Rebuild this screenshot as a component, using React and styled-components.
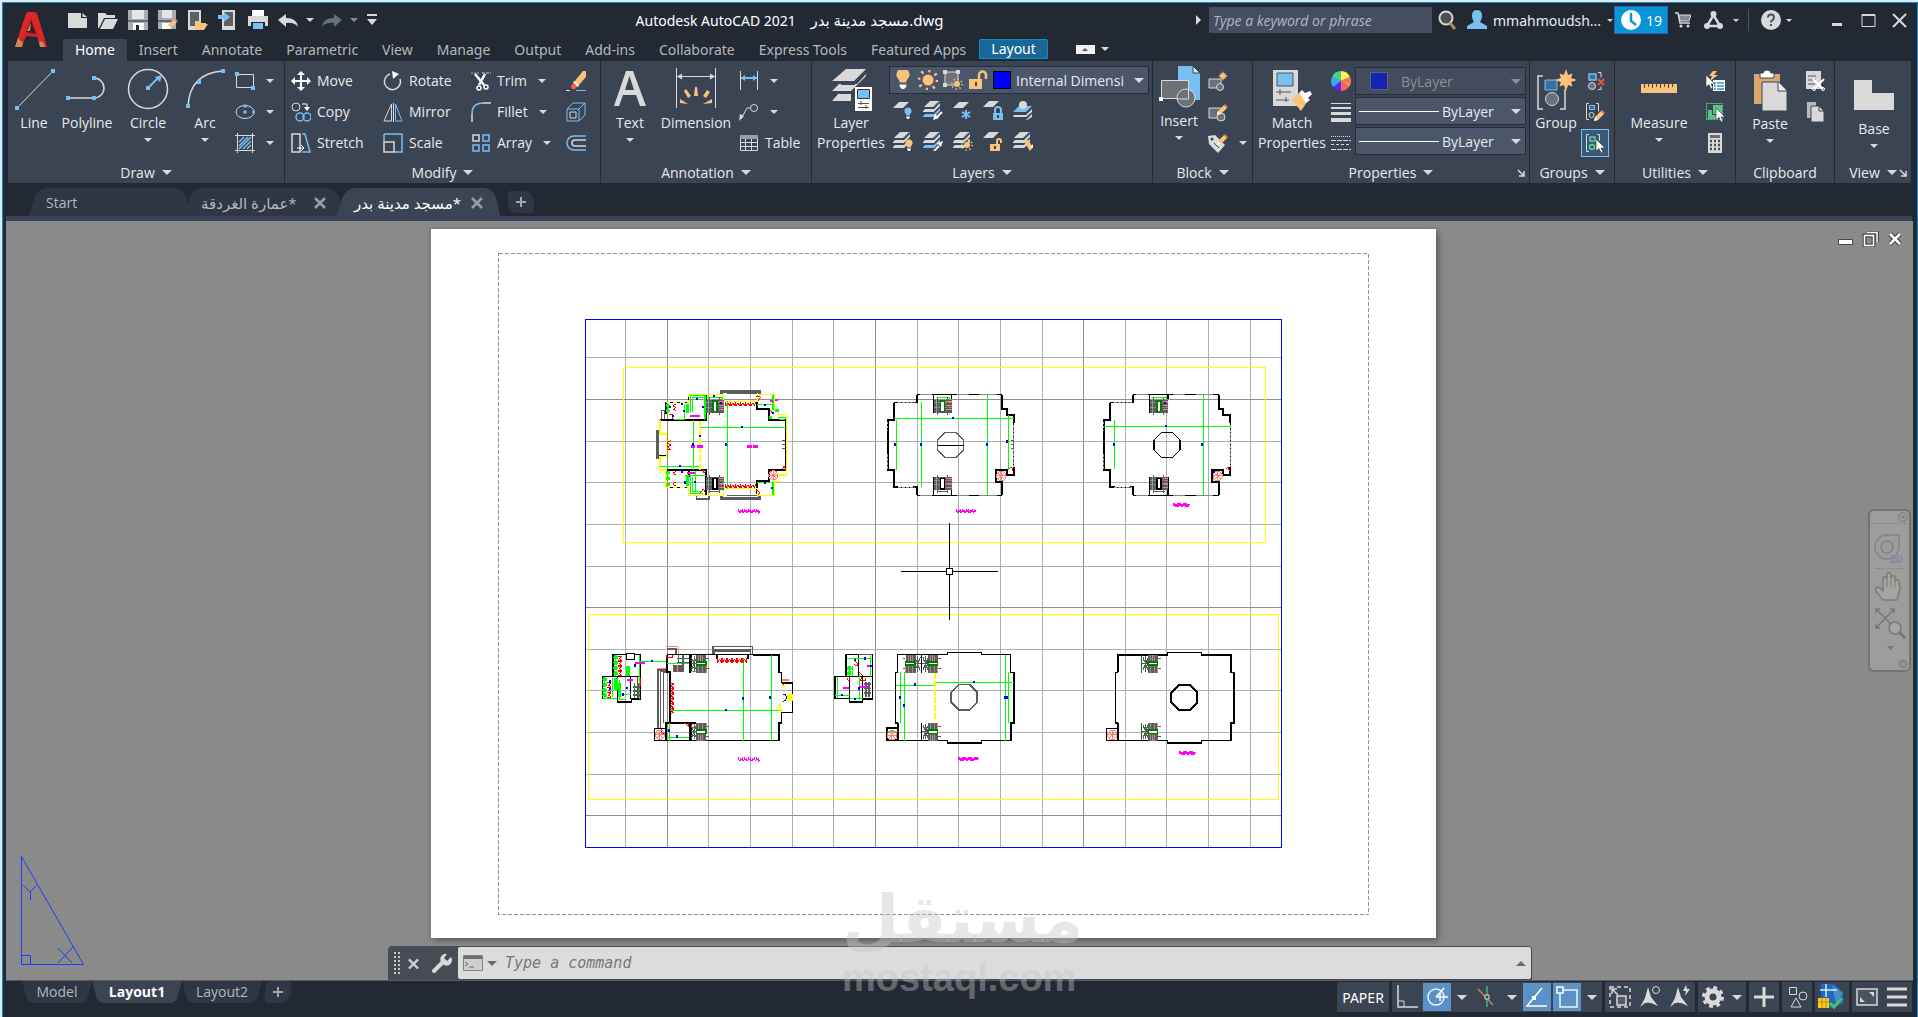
import React, { useState } from "react";
import styled, { createGlobalStyle, css } from "styled-components";

const GlobalStyle = createGlobalStyle`
  * {
    box-sizing: border-box;
  }
  body {
    margin: 0;
    background: #e4e9ec;
    font-family: "Open Sans", "DejaVu Sans", sans-serif;
    font-size: 14px;
    color: #e8eaed;
  }
  button, input, select {
    font: inherit;
    color: inherit;
    border: 0;
    padding: 0;
    margin: 0;
    background: none;
  }
  button {
    cursor: pointer;
  }
  svg {
    display: block;
    flex: none;
  }
`;

const L = "#d9d9d9";
const B = "#79bff2";
const O = "#f6c47a";
const G = "#6e7278";

/* ---------- icons ---------- */

const Svg = ({ w = 20, h = w, vw = w, vh = h, children }) => (
  <svg width={w} height={h} viewBox={`0 0 ${vw} ${vh}`} fill="none">
    {children}
  </svg>
);

const Dot = ({ x, y, s = 4, c = B }) => (
  <rect x={x - s / 2} y={y - s / 2} width={s} height={s} fill={c} />
);

const Sun = ({ x, y, r = 4, c = O }) => (
  <g>
    <circle cx={x} cy={y} r={r} fill={c} />
    <circle cx={x} cy={y} r={r * 1.7} stroke={c} strokeWidth={r * 0.6} strokeDasharray={`${r * 0.4} ${r * 0.935}`} />
  </g>
);

const Star = ({ x, y, r = 8 }) => {
  const pts = [];
  for (let i = 0; i < 16; i++) {
    const q = i % 2 ? r * 0.5 : i % 4 ? r * 0.85 : r;
    const a = (i * Math.PI) / 8;
    pts.push(`${x + Math.sin(a) * q},${y - Math.cos(a) * q}`);
  }
  return <polygon points={pts.join(" ")} fill={O} />;
};

const Pencil = ({ x, y }) => (
  <g transform={`translate(${x} ${y})`}>
    <path d="M0 10 L1 6 L7 0 L10 3 L4 9 Z" fill={O} />
    <path d="M7 0 L8 -1 L11 2 L10 3 Z" fill="#f0705a" />
    <path d="M0 10 L1 6 L4 9 Z" fill="#fff" />
  </g>
);

const Bulb = ({ x, y, k = 1, c = O }) => (
  <g transform={`translate(${x} ${y}) scale(${k})`}>
    <path d="M-6 -3 a6 6 0 1 1 12 0 c0 3 -3 4 -3 7 h-6 c0 -3 -3 -4 -3 -7z" fill={c} />
    <path d="M-3 6h6v2l-2 2h-2l-2-2z" fill="#fff" />
  </g>
);

const Lock = ({ x, y, c = O, open }) => (
  <g>
    <rect x={x} y={y} width="10" height="7" fill={c} />
    <path d={open ? `M${x + 7} ${y} v-3 a2 2 0 0 1 4 0 v2` : `M${x + 2} ${y} v-3 a3 3 0 0 1 6 0 v3`} stroke={c} strokeWidth="2" />
    <rect x={x + 4} y={y + 2} width="2" height="3" fill="#444" />
  </g>
);

const Sheet = ({ x = 0, y = 0, c = L }) => <path d={`M${x + 6} ${y} h10 l-6 6 h-10z`} fill={c} />;

const Layers3 = ({ c = L, last = L }) => (
  <g>
    <Sheet x={1} y={1} c={c} />
    <path d="M2 9 h9 l6-6 v3 l-6 6 h-12z" fill={c} />
    <path d="M2 14 h9 l6-6 v3 l-6 6 h-12z" fill={last} />
    <path d="M0 7.500h10l6-6M0 12.500h11l6-6" stroke="#3b4453" />
  </g>
);

const Cursor = ({ x, y }) => (
  <path transform={`translate(${x} ${y})`} d="M0 0 V12 L3 9.500 L5 14 L7 13 L5 9 H9 Z" fill="#fff" stroke="#333" strokeWidth=".6" />
);

const LogoIcon = () => (
  <svg width="34" height="38" viewBox="0 0 34 38">
    <path d="M1 36 L12 3 Q13 1 15 1 H19 Q22 1 23 3 L33 36 H26 L23 26 L12 25 L8 36 Z" fill="#c4262b" />
    <path d="M12 3 Q13 1 15 1 H19 Q22 1 23 3 L33 36 H29 L17 7 L7 31 L3 30 Z" fill="#e02427" />
    <path d="M1 36 L4 27 L9 32 L8 36 Z M26 36 L25 30 L29 31 L31 36 Z" fill="#c98a5a" />
    <path d="M17 9 L22 23 L12 21 Z" fill="#3a1f24" />
    <path d="M13 20 L17 11 L16 20 Z" fill="#c98a5a" />
  </svg>
);

const icons = {
  newFile: <Svg><path d="M0 3h13v5h6v10H0z" fill={L} /><path d="M14.500 3l4.500 4h-4.500z" fill={L} /></Svg>,
  open: <Svg><path d="M0 3h7l2 2h8v3H6L1 18H0z" fill={L} /><path d="M7 9h13l-5 10H2z" fill={L} /></Svg>,
  save: (
    <Svg><path d="M0 0h20v20H0z" fill="#a9adb3" /><path d="M4 0h12v9H4z" fill="#e6e6e6" /><path d="M5 13h11v7H5z" fill="#fff" /><path d="M8 15h3v5H8z" fill="#222933" /><path d="M0 11h20" stroke="#222933" /></Svg>
  ),
  saveAs: (
    <Svg><path d="M0 0h18v19H0z" fill="#a9adb3" /><path d="M4 0h10v8H4z" fill="#e6e6e6" /><path d="M4 13h9v6H4z" fill="#fff" /><path d="M0 11h18" stroke="#222933" /><Pencil x={9} y={9} /></Svg>
  ),
  openMobile: (
    <Svg><path d="M0 0h13v20H0z" fill={L} /><path d="M2 2h9v14H2z" fill="#5d6167" /><path d="M7 11h5l1 2h5v2h-7l-3 5h-1z" fill={O} /><path d="M11 14h9l-4 6H8z" fill={O} /></Svg>
  ),
  saveMobile: (
    <Svg><path d="M4 0h13v20H4z" fill={L} /><path d="M6 2h9v14H6z" fill="#5d6167" /><path d="M0 5h6V2l6 5-6 5V9H0z" fill={B} /></Svg>
  ),
  print: (
    <Svg><path d="M4 0h12v6H4z" fill="#fff" /><path d="M0 6h20v10H0z" fill={L} /><path d="M3 12h14v8H3z" fill="#222933" /><path d="M5 13h10v6H5z" fill={B} /></Svg>
  ),
  undo: <Svg><path d="M0 10l8-6v4q11 0 12 9q-4-5-12-4v4z" fill={L} /></Svg>,
  redo: <Svg><path d="M20 10l-8-6v4q-11 0-12 9q4-5 12-4v4z" fill="#6a7079" /></Svg>,
  customize: <Svg w={12} h={12}><path d="M1 1h10" stroke={L} strokeWidth="2" /><path d="M1 5h10l-5 6z" fill={L} /></Svg>,
  search: <Svg><circle cx="9" cy="8" r="6.500" fill="#4d4f52" stroke={L} strokeWidth="2" /><path d="M13 13l5 6" stroke="#a98d63" strokeWidth="3" /></Svg>,
  user: <Svg><path d="M10 0c4 0 5 3 5 6 0 3-2 6-2 6l7 4v3H0v-3l7-4s-2-3-2-6c0-3 1-6 5-6z" fill={B} /></Svg>,
  clock: <Svg><circle cx="10" cy="10" r="10" fill="#fff" /><path d="M10 3v8l5 4" stroke="#0696d7" strokeWidth="2.500" /></Svg>,
  cart: (
    <Svg w={16}><path d="M0 1h3l2 10h10" stroke={L} strokeWidth="1.500" /><path d="M4 3h12l-2 6H5z" fill="#85888c" stroke={L} /><circle cx="6" cy="14" r="1.500" fill={L} /><circle cx="13" cy="14" r="1.500" fill={L} /></Svg>
  ),
  a360: <Svg w={19}><path d="M9.500 4L3 15h13z" stroke={L} strokeWidth="2.500" /><circle cx="9.500" cy="3" r="3" fill={L} /><circle cx="3" cy="15" r="3" fill={L} /><circle cx="16" cy="15" r="3" fill={L} /></Svg>,
  help: <Svg><circle cx="10" cy="10" r="10" fill={L} /><path d="M7 7.500q0-3 3-3t3 3q0 2-3 4v1" stroke="#4a4f57" strokeWidth="2" /><path d="M9 14h2v2H9z" fill="#4a4f57" /></Svg>,
  min: <Svg w={15}><path d="M2 10h10v3H2z" fill={L} /></Svg>,
  max: <Svg w={15}><path d="M1 1.500h13v12H1z" stroke={L} /><path d="M1 2h13" stroke={L} strokeWidth="2" /></Svg>,
  close: <Svg w={15}><path d="M1 1l13 13M14 1L1 14" stroke={L} strokeWidth="2" /></Svg>,

  line: <Svg w={42} h={44}><path d="M4 41L40 4" stroke={L} /><Dot x={4} y={41} /><Dot x={40} y={4} /></Svg>,
  polyline: <Svg w={42} h={44}><path d="M2 31H28A9 9 0 0 0 28 11" stroke={L} strokeWidth="1.500" /><Dot x={2} y={31} /><Dot x={28} y={31} /><Dot x={28} y={11} /></Svg>,
  circle: <Svg w={42} h={44}><circle cx="21" cy="22" r="19.500" stroke={L} strokeWidth="1.500" /><path d="M21 21l10-10" stroke={B} strokeWidth="2" /><path d="M35 8l-2 7-5-5z" fill={B} /><Dot x={21} y={21} /></Svg>,
  arc: <Svg w={42} h={44}><path d="M4 39Q6 6 39 4" stroke={L} strokeWidth="1.500" /><Dot x={4} y={39} /><Dot x={15} y={15} /><Dot x={39} y={4} /></Svg>,
  rect: <Svg><path d="M1.500 3.500h17v13h-17z" stroke={L} /><Dot x={2} y={3} /><Dot x={18} y={17} /></Svg>,
  ellipse: <Svg><ellipse cx="10" cy="10" rx="9" ry="6.500" stroke={L} /><Dot x={10} y={4} s={3} /><Dot x={10} y={10} s={3} /><Dot x={19} y={10} s={3} /></Svg>,
  hatch: <Svg><path d="M0 2.500h20M0 17.500h20M2.500 0v20M17.500 0v20" stroke={L} /><path d="M4 9l5-5M4 13l9-9M4 16L16 4M8 16l8-8M12 16l4-4" stroke={B} strokeWidth="1.500" /></Svg>,

  move: <Svg><path d="M10 2v16M2 10h16" stroke="#fff" strokeWidth="2" /><path d="M10 0l4 4H6zM10 20l4-4H6zM0 10l4-4v8zM20 10l-4-4v8z" fill="#fff" /></Svg>,
  rotate: <Svg><path d="M7 3A8 8 0 1 0 17 8" stroke={L} strokeWidth="1.500" /><path d="M9 0l7 3-6 5z" fill="#fff" /></Svg>,
  trim: (
    <Svg><path d="M0 2h8" stroke={B} strokeDasharray="2 1" /><path d="M11 2h9" stroke={L} strokeDasharray="3 1" /><path d="M4 3l9 11M14 3L8 14" stroke="#fff" strokeWidth="2.500" /><circle cx="8" cy="17" r="2" stroke="#fff" strokeWidth="1.500" /><circle cx="15" cy="16" r="2" stroke="#fff" strokeWidth="1.500" /></Svg>
  ),
  erase: <Svg><path d="M8 11L17 0h3v6l-8 9z" fill={O} /><path d="M8 11l4 4-3 3q-4 1-4-3z" fill="#f0624d" /><path d="M7 11l5 5 1-1-5-5z" fill="#fff" /><path d="M0 19.500h4" stroke={L} /><path d="M10 19.500h10" stroke={B} /></Svg>,
  copy: <Svg><circle cx="5" cy="5" r="4" stroke={L} /><path d="M11 2h5v3" stroke="#fff" /><path d="M13 5h6l-3 4z" fill="#fff" /><circle cx="9" cy="15" r="4" stroke={B} strokeWidth="1.500" /><circle cx="16" cy="15" r="4" stroke={B} strokeWidth="1.500" /></Svg>,
  mirror: <Svg><path d="M8.500 2v17H1z" stroke={L} /><path d="M12.500 2v17H19z" stroke={B} /><path d="M10.500 1v19" stroke={L} /></Svg>,
  fillet: <Svg><path d="M1 12v8M12 1h8" stroke={L} strokeWidth="1.500" /><path d="M1 12Q1 1 12 1" stroke={B} strokeWidth="1.500" /></Svg>,
  explode: <Svg><path d="M1 7h12v12H1zM1 7l6-6h12l-6 6M19 1v12l-6 6" stroke={B} /><path d="M4 10h6v6H4z" stroke={L} /></Svg>,
  stretch: <Svg><path d="M1 1h8v18H1z" stroke={L} strokeWidth="1.500" /><path d="M11 1h3l5 18h-8" stroke={B} strokeWidth="1.500" /><path d="M6 15h7M10 12l3 3-3 3" stroke="#fff" /></Svg>,
  scale: <Svg><path d="M1 1h18v18h-8M1 1v7" stroke={B} strokeWidth="1.500" /><path d="M1 9h10v10H1z" stroke={L} strokeWidth="1.500" /></Svg>,
  array: <Svg><path d="M2 2h6v6H2z" stroke={L} strokeWidth="1.500" /><path d="M12 2h6v6h-6zM2 12h6v6H2zM12 12h6v6h-6z" stroke={B} strokeWidth="1.500" /></Svg>,
  offset: <Svg><path d="M20 3H8a7 7 0 0 0 0 14h12" stroke={B} strokeWidth="1.500" /><path d="M20 7H9a3 3 0 0 0 0 6h11" stroke={L} strokeWidth="1.500" /></Svg>,

  text: <Svg w={42} h={44}><path d="M5 39L17 4h7l13 35h-6l-4-11H14l-4 11zM16 23h9L20.500 9z" fill={L} fillRule="evenodd" /></Svg>,
  dimension: (
    <Svg w={42} h={44}><path d="M1.500 1v40M40.500 1v40M2 9.500h38" stroke={L} /><path d="M2 9.500l5-3v6zM40 9.500l-5-3v6z" fill={L} /><path d="M19 29l1-9h2l1 9zM13 31l-4-7 2-2 5 7zM28 29l4-6 3 2-4 6zM13 37l-8-1v-4zM28 37l9-1v-4z" fill={O} /></Svg>
  ),
  linear: <Svg><path d="M1.500 0v19M18.500 0v19" stroke={L} /><path d="M2 7h16" stroke={B} strokeWidth="2" /><path d="M2 7l4-3v6zM18 7l-4-3v6z" fill={B} /></Svg>,
  leader: <Svg><circle cx="15" cy="6" r="3.500" stroke={L} /><path d="M11 6H8L2 17" stroke={L} /><path d="M0 19l1-7 4 2z" fill={L} /></Svg>,
  table: <Svg><path d="M1.500 2.500h17v15h-17z" stroke={L} /><path d="M1 2h18v4H1z" fill="#9a9da1" /><path d="M1 9.500h18M1 13.500h18M6.500 6v11M12.500 6v11" stroke={L} /></Svg>,

  layerProps: (
    <Svg w={42} h={44}><path d="M16 2h20L24 14H2zM9 17l-7 7h19L36 9V7l-9 10zM9 26l-7 8h19V26z" fill={L} /><path d="M11 17h14M9 26h14" stroke="#3b4453" strokeWidth="2" /><path d="M25 20h17v24H25z" fill="#fff" /><path d="M27.500 22.500h12v9h-12z" fill={B} stroke="#333" /><path d="M28 36.500h11M28 40.500h11M31 34v4M36 38v4" stroke="#555" /></Svg>
  ),
  bulb: <Svg w={20}><Bulb x={10} y={8} k={1.1} /></Svg>,
  sun: <Svg><Sun x={10} y={10} r={5.500} /></Svg>,
  freezeVp: <Svg><path d="M2 2h13v13H2z" fill={G} stroke={L} /><Dot x={2} y={2} c={L} /><Dot x={15} y={2} c={L} /><Dot x={2} y={15} c={L} /><Sun x={14} y={14} r={3} /></Svg>,
  unlock: <Svg><path d="M1 9h13v10H1z" fill={O} /><path d="M11 9V5a3.500 3.500 0 0 1 7 0v4" stroke={O} strokeWidth="2.500" /><path d="M7 12h2v4H7z" fill="#444" /></Svg>,
  layOff: <Svg><Sheet y={2} /><Bulb x={15} y={13} k={0.6} c={B} /></Svg>,
  layIso: <Svg><Layers3 last={B} /><path d="M19 12l-5 5" stroke="#fff" strokeWidth="2" /><path d="M10 20l2-6 4 4z" fill="#fff" /></Svg>,
  layFreeze: <Svg><Sheet y={2} /><path d="M13 10v9M9 12l8 5M17 12l-8 5" stroke={B} strokeWidth="2" /></Svg>,
  layLock: <Svg><Sheet y={1} /><Lock x={10} y={13} c={B} /></Svg>,
  layCurrent: <Svg><path d="M0 12l6-6h13l-6 6z" fill={B} /><circle cx="10" cy="5" r="4" fill={L} /><path d="M1 15h12l6-6v3l-6 5H0zM0 20h13l6-6v3l-5 3z" fill={L} /></Svg>,
  layOn: <Svg><Layers3 /><Bulb x={16} y={14} k={0.6} /></Svg>,
  layUniso: <Svg><Layers3 last={B} /><path d="M11 20l5-5" stroke="#fff" strokeWidth="2" /><path d="M20 10l-2 6-4-4z" fill="#fff" /></Svg>,
  layThaw: <Svg><Layers3 /><Sun x={14} y={14} r={3} /></Svg>,
  layUnlock: <Svg><Sheet y={1} /><Lock x={7} y={13} open /></Svg>,
  layMatch: <Svg><Layers3 /><path d="M11 11l3-3 6 8-3 4z" fill={O} /><path d="M17 17l3-4v4z" fill="#fff" /></Svg>,

  insert: (
    <Svg w={42} h={44}><path d="M20 1h15l7 7v27H20z" fill={B} /><path d="M35 1v7h7z" fill="#d3e9f9" stroke="#3b4453" /><path d="M3.500 15.500h27v18h-27z" fill={G} stroke={L} /><circle cx="28" cy="33" r="9" fill={G} stroke={L} /><path d="M30.500 16v18H19" stroke={L} /><Dot x={3} y={34} c="#fff" /></Svg>
  ),
  blkNew: <Svg><path d="M1 8h12v9H1z" fill={G} stroke={L} /><circle cx="12" cy="16" r="3.500" fill={G} stroke={L} /><Star x={15} y={5} r={5} /></Svg>,
  blkEdit: <Svg><path d="M1 6h12v10H1z" fill={G} stroke={L} /><circle cx="13" cy="15" r="4" fill={G} stroke={L} /><Pencil x={9} y={3} /></Svg>,
  attEdit: <Svg><path d="M0 3l7-1 10 10-7 8L1 11z" fill={L} /><circle cx="4" cy="6" r="1.500" fill="#3b4453" /><path d="M6 10l5 5" stroke="#3b4453" /><Pencil x={9} y={2} /></Svg>,

  match: (
    <Svg w={42} h={44}><path d="M2 3h25v36H2z" fill={L} /><path d="M6 6h16v13H6z" fill={B} stroke="#51555c" /><path d="M5 25h15M5 33h13M9 22v6M15 30v5" stroke="#51555c" /><path d="M21 32l7-6 8 9-6 9-5-6z" fill={O} /><path d="M28 26l3-3 3 3 5-2 2 3-4 4 2 2-4 3z" fill="#fff" /></Svg>
  ),
  wheel: (
    <Svg><path d="M10 10V0a10 10 0 0 1 9 6z" fill="#fff04d" /><path d="M10 10l9-4a10 10 0 0 1-1 10z" fill="#f9a43c" /><path d="M10 10l8 6a10 10 0 0 1-8 4z" fill="#fa5d6f" /><path d="M10 10v10a10 10 0 0 1-8-4z" fill="#5527f3" /><path d="M10 10l-8 6a10 10 0 0 1-1-10z" fill="#3fa8f5" /><path d="M10 10L1 6a10 10 0 0 1 9-6z" fill="#3fd68d" /><path d="M10 10l9-4a10 10 0 0 1 0 7z" fill="#fb6f5f" /></Svg>
  ),
  weights: <Svg><path d="M0 1.500h20" stroke={L} /><path d="M0 6h20" stroke={L} strokeWidth="2" /><path d="M0 11.500h20" stroke={L} strokeWidth="3" /><path d="M0 18h20" stroke={L} strokeWidth="4" /></Svg>,
  linetypes: <Svg><path d="M0 3.500h20" stroke={L} strokeDasharray="1 1" /><path d="M0 7.500h20M0 16.500h20" stroke={L} strokeDasharray="5 1" /><path d="M0 11.500h20" stroke={L} strokeDasharray="3 2" /></Svg>,

  group: (
    <Svg w={42} h={44}><path d="M8 9H3v33h5M25 42h5V22" stroke={L} strokeWidth="1.500" /><path d="M10 13h12v10H10z" fill="#3e6f9c" stroke={B} /><circle cx="17" cy="32" r="6.500" fill={G} stroke={L} /><Star x={31} y={13} r={11} /></Svg>
  ),
  ungroup: <Svg><path d="M4 3h7v6H4z" fill="#3e6f9c" stroke={B} strokeWidth="1.500" /><circle cx="7" cy="15" r="3.500" fill={G} stroke={L} /><path d="M13 1.500h3v5M13 18.500h3v-3" stroke={L} /><path d="M13 8l6 6M19 8l-6 6" stroke="#f04e3e" strokeWidth="2" /></Svg>,
  groupEdit: <Svg><path d="M4 1.500H1.500v16H4M11 1.500h2.500v8" stroke={L} /><path d="M4.500 3.500h5v4h-5z" fill="#3e6f9c" stroke={B} /><circle cx="6.500" cy="13" r="2.500" stroke={L} /><Pencil x={9} y={9} /></Svg>,
  groupSel: <Svg><path d="M4 1.500H1.500v17H4M12 1.500h2.500v6" stroke={L} /><path d="M5 4h5v4H5z" stroke="#5fd38d" strokeWidth="1.500" /><circle cx="7" cy="14" r="2.500" stroke="#5fd38d" strokeWidth="1.500" /><Cursor x={11} y={6} /></Svg>,

  measure: <Svg w={42} h={44}><path d="M3 17h36v9H3z" fill={O} /><path d="M6.500 17v4M10.500 17v3M14.500 17v4M18.500 17v3M22.500 17v4M26.500 17v3M30.500 17v4M34.500 17v3" stroke="#4b4a45" /></Svg>,
  quickSel: <Svg><path d="M8 9h12v11H8z" fill="#fff" /><path d="M9 12h2M9 15h2M9 18h2M12 12h7M12 15h7M12 18h7" stroke="#3a8ed0" strokeWidth="1.500" /><Cursor x={1} y={4} /><path d="M8 0h4L9 4h4L5 10l2-5H4z" fill={O} /></Svg>,
  selectAll: <Svg><path d="M1.500 1.500h16v16h-16z" stroke="#5fd38d" strokeDasharray="2 1" /><path d="M8 3h9v9H8zM3 8h4v5h5v4H3z" fill="#5cc28c" /><Cursor x={11} y={6} /></Svg>,
  calc: <Svg><path d="M3 0h14v20H3z" fill={L} /><path d="M5 2h10v3H5z" fill="#6a6d72" /><path d="M5 8h10M5 12h10M5 16h10" stroke="#4a4d52" strokeWidth="2.500" strokeDasharray="2 2" /></Svg>,

  paste: (
    <Svg w={42} h={44}><path d="M5 6h26v30H5z" fill="#dca76a" /><path d="M11 10V5h3q1-3 4-3t4 3h3v5z" fill="#fff" stroke="#3b4453" /><path d="M13 14h17l8 9v20H13z" fill={L} stroke="#3b4453" /><path d="M29 14v9h9" stroke="#3b4453" fill="#f2f2f2" /></Svg>
  ),
  cut: <Svg><path d="M1 0h15v18H1z" fill={L} /><path d="M3 5h8M3 9h8M3 13h7" stroke="#555" /><path d="M8 8l10 10M19 8L9 18" stroke="#fff" strokeWidth="2" /><circle cx="9" cy="18" r="1.500" stroke="#fff" /><circle cx="18" cy="18" r="1.500" stroke="#fff" /></Svg>,
  copyClip: <Svg><path d="M2 0h9v16H2z" fill="#b8babd" /><path d="M6 4h8l5 5v11H6z" fill={L} stroke="#3b4453" /><path d="M14 4v5h5" stroke="#3b4453" /></Svg>,
  base: <Svg w={42} h={44}><path d="M1 7h18v13h22v17H1z" fill={L} /></Svg>,

  ortho: <Svg w={24}><path d="M3 0v22h20" stroke={L} strokeWidth="1.500" /><path d="M3 16h6v6" stroke={L} /></Svg>,
  polar: <Svg w={24}><circle cx="11" cy="12" r="8" stroke="#e9f3fb" strokeWidth="1.500" /><path d="M11 12l8-9M11 12h12M15 8v8" stroke="#fff" strokeWidth="1.500" /></Svg>,
  iso: <Svg w={24}><path d="M3 4l15 16" stroke="#c97f5c" strokeWidth="1.500" /><path d="M12 1v21" stroke="#4fb07a" strokeWidth="1.500" /><path d="M10 10h4v4h-4z" fill="#3b4453" stroke={L} /></Svg>,
  otrack: <Svg w={24}><path d="M22 21H2L17 3" stroke="#fff" strokeWidth="1.500" /><Dot x={9} y={13} c="#fff" /></Svg>,
  osnap: <Svg w={24}><path d="M5 5h17v17H5z" stroke="#e9f3fb" strokeWidth="1.500" /><path d="M2 2h6v6H2z" fill="#5b91c4" stroke="#fff" strokeWidth="1.500" /></Svg>,
  selCycle: <Svg w={24}><path d="M2 2h20v20H2z" stroke={L} strokeWidth="1.500" strokeDasharray="4 3" /><path d="M9 11h9v9H9z" stroke={L} strokeWidth="1.500" fill="#555c68" /><path d="M5 5l5 5M4 9V4h5" stroke={L} strokeWidth="1.500" /></Svg>,
  annoVis: <Svg w={24}><path d="M10 2l3 10 7 9-7-3h-6l-5 4 5-9z" fill={L} /><path d="M10 17l3 5H7z" fill="#3b4453" /><circle cx="18" cy="5" r="3.500" stroke={L} /></Svg>,
  annoAuto: <Svg w={24}><path d="M10 2l3 10 7 9-7-3h-6l-5 4 5-9z" fill={L} /><path d="M10 17l3 5H7z" fill="#3b4453" /><path d="M18 0l-3 6h3l-1 5 5-7h-3z" fill={L} /></Svg>,
  gear: (
    <Svg w={24}><circle cx="12" cy="12" r="6" stroke={L} strokeWidth="5" /><circle cx="12" cy="12" r="9" stroke={L} strokeWidth="4" strokeDasharray="3.6 3.47" /></Svg>
  ),
  plus: <Svg w={24}><path d="M12 2v20M2 12h20" stroke={L} strokeWidth="3" /></Svg>,
  isolate: <Svg w={24}><path d="M4.500 2.500h7v7h-7z" stroke={L} /><circle cx="18" cy="11" r="4" stroke={L} /><path d="M11 13l5 9H6z" stroke={L} /></Svg>,
  gfx: (
    <Svg w={28} h={26}><path d="M3 0h13l9 8v12l-10 4H3z" fill="#2069b8" /><path d="M14 1l11 8-7 11z" fill="#4a8cc8" /><path d="M2 6h17M8 0v13" stroke="#d4ecff" strokeWidth="1.500" /><path d="M0 14h11v10H0z" fill="#f7cc1e" /><path d="M0 18h11M4 14v10M8 14v10" stroke="#c78a11" /><path d="M12 19l4 4 8-9" stroke="#4dbb6a" strokeWidth="3" /></Svg>
  ),
  fullscreen: <Svg w={24}><path d="M2 4h20v16H2z" stroke={L} strokeWidth="1.500" fill="#4b5260" /><path d="M14 7h5v5zM5 12v5h5z" fill={L} /></Svg>,
  menu: <Svg w={24}><path d="M2 4h20M2 12h20M2 20h20" stroke={L} strokeWidth="3" /></Svg>,
};

/* ---------- shared parts ---------- */

const Caret = styled.span`
  flex: none;
  width: 0;
  height: 0;
  border: ${({ $s = 4 }) => $s}px solid transparent;
  border-top-color: ${({ $c = "#d9d9d9" }) => $c};
  border-bottom-width: 0;
`;

const Window = styled.div`
  display: flex;
  flex-direction: column;
  min-height: calc(100vh - 2px);
  margin: 2px 0 0 2px;
  border: 1px solid #0a8fce;
  border-bottom: 0;
  background: #222933;
  position: relative;
`;

const Header = styled.header`
  display: grid;
  grid-template-columns: 60px 1fr;
  grid-template-rows: 36px 22px;
  font-family: "Noto Sans", "DejaVu Sans", sans-serif;
`;

const AppButton = styled.button`
  grid-row: 1 / 3;
  padding: 8px 0 0 11px;
  display: flex;
`;

const TitleBar = styled.div`
  display: flex;
  align-items: center;
  padding: 0 2px 2px 0;
`;

const ToolButton = styled.button`
  width: ${({ $w = 30 }) => $w}px;
  height: 30px;
  display: flex;
  align-items: center;
  justify-content: center;
`;

const Title = styled.div`
  flex: 1;
  text-align: center;
  white-space: pre;
  color: #fff;
  bdi {
    font-size: 15px;
  }
`;

const Search = styled.input`
  width: 223px;
  height: 26px;
  padding: 0 4px;
  background: #454e61;
  font-family: "Open Sans", sans-serif;
  font-style: italic;
  outline: none;
  &::placeholder {
    color: #b3b8c0;
    opacity: 1;
  }
`;

const RightCaret = styled.span`
  border: 5px solid transparent;
  border-left-color: #d9d9d9;
  border-right-width: 0;
  margin-right: 8px;
`;

const UserButton = styled.button`
  display: flex;
  align-items: center;
  gap: 6px;
  width: 152px;
  padding-left: 5px;
  white-space: nowrap;
`;

const Trial = styled.button`
  display: flex;
  align-items: center;
  gap: 5px;
  width: 54px;
  height: 28px;
  padding-left: 6px;
  background: #0696d7;
  border: 1px solid #2a63b5;
  color: #fff;
`;

const Divider = styled.span`
  width: 1px;
  height: 22px;
  margin: 0 7px 0 9px;
  background: #4a515d;
`;

const MenuCaret = styled(ToolButton)`
  justify-content: ${({ $end }) => ($end ? "flex-end" : "flex-start")};
`;

const TabRow = styled.nav`
  display: flex;
  align-items: stretch;
`;

const RibbonTab = styled.button`
  padding: 0 12px;
  color: #b4b8be;
  white-space: nowrap;
  line-height: 20px;
  border-radius: 2px 2px 0 0;
  ${({ $active }) =>
    $active &&
    css`
      background: #3b4453;
      color: #fff;
    `}
  ${({ $context }) =>
    $context &&
    css`
      background: #1a6695;
      border: 1px solid #0a8fce;
      color: #fff;
      padding: 0 11px;
      line-height: 18px;
      margin: 0 28px 2px 1px;
    `}
`;

const Collapse = styled.button`
  display: flex;
  align-items: center;
  gap: 6px;
  padding-bottom: 2px;
  span:first-child {
    width: 19px;
    height: 9px;
    background: #f1f1f1;
    display: flex;
    align-items: center;
    justify-content: center;
    &::after {
      content: "";
      border: 3px solid transparent;
      border-bottom-color: #555;
      border-top-width: 0;
    }
  }
`;

const Ribbon = styled.section`
  display: flex;
  height: 122px;
  margin: 0 5px;
`;

const PanelBox = styled.div`
  flex: 1 1 ${({ $w }) => $w}px;
  min-width: 0;
  display: flex;
  flex-direction: column;
  background: #3b4453;
  border-right: 1px solid #222933;
`;

const PanelBody = styled.div`
  flex: 1;
  display: flex;
  padding-left: ${({ $pad = 4 }) => $pad}px;
`;

const PanelTitle = styled.div`
  display: grid;
  grid-template-columns: 1fr auto 1fr;
  align-items: center;
  height: 24px;
  padding-top: 3px;
  button {
    display: flex;
    align-items: center;
    gap: 7px;
    grid-column: 2;
  }
  svg {
    justify-self: end;
    margin-right: 4px;
  }
`;

const BigButton = styled.button`
  width: ${({ $w }) => $w}px;
  flex: none;
  display: flex;
  flex-direction: column;
  align-items: center;
  padding-top: ${({ $top = 6 }) => $top}px;
  line-height: 20px;
  white-space: pre-line;
  svg {
    margin-bottom: 2px;
  }
  ${Caret} {
    margin-top: 5px;
  }
`;

const Stack = styled.div`
  display: grid;
  grid-auto-rows: 31px;
  align-content: start;
  padding-top: 4px;
  padding-left: ${({ $pad = 0 }) => $pad}px;
  width: ${({ $w }) => ($w ? `${$w}px` : "auto")};
`;

const SmallButton = styled.button`
  display: flex;
  align-items: center;
  gap: 6px;
  white-space: nowrap;
  ${({ $on }) =>
    $on &&
    css`
      width: 28px;
      height: 28px;
      align-self: center;
      justify-content: center;
      margin-left: -4px;
      background: #3a5878;
      border: 1px solid #79bff2;
    `}
  ${Caret} {
    margin-left: 5px;
  }
`;

const LayerTools = styled.div`
  flex: 1;
  padding: 5px 3px 0 3px;
`;

const IconRow = styled.div`
  display: flex;
  height: 31px;
  align-items: center;
  padding-left: 4px;
  gap: 10px;
`;

const Combo = styled.label`
  display: flex;
  align-items: center;
  gap: 5px;
  height: 28px;
  padding: 0 4px 0 3px;
  border: 1px solid #262d39;
  background: ${({ $off }) => ($off ? "#434b5c" : "#4b566a")};
  color: ${({ $off }) => ($off ? "#8a9099" : "#e8eaed")};
  select {
    flex: 1;
    min-width: 0;
    appearance: none;
    outline: none;
    opacity: 1;
  }
`;

const Swatch = styled.span`
  width: 18px;
  height: 18px;
  background: ${({ $c }) => $c};
  border: 1px solid ${({ $b = "#000" }) => $b};
  margin: ${({ $m = "0" }) => $m};
`;

const Rule = styled.span`
  width: 80px;
  height: 1px;
  margin-right: -2px;
  background: #fff;
`;

const PropStack = styled.div`
  flex: 1;
  display: grid;
  grid-template-rows: repeat(3, 28px);
  gap: 2px;
  padding: 6px 3px 0 0;
`;

const DocTabs = styled.nav`
  display: flex;
  align-items: flex-end;
  height: 33px;
  padding-left: 30px;
`;

const slant = css`
  position: relative;
  isolation: isolate;
  &::before,
  &::after {
    content: "";
    position: absolute;
    z-index: -1;
    inset: 0;
    background: ${({ $active }) => ($active ? "#3b4453" : "#2f3644")};
  }
`;

const DocTab = styled.div`
  ${slant}
  display: flex;
  align-items: center;
  justify-content: space-between;
  width: ${({ $w }) => $w}px;
  height: 28px;
  padding: 1px 14px 0 13px;
  margin-right: 1px;
  color: ${({ $active }) => ($active ? "#fff" : "#b4b8be")};
  &::before {
    right: 40%;
    border-radius: 10px 0 0 0;
    transform: skewX(-16deg);
  }
  &::after {
    left: 40%;
    border-radius: 0 10px 0 0;
    transform: skewX(12deg);
  }
  bdi {
    font-size: 15px;
  }
  button {
    display: flex;
  }
`;

const Strip = styled.div`
  height: 5px;
  margin: 0 5px 0 3px;
  background: #3b4255;
`;

const Canvas = styled.main`
  flex: 1;
  position: relative;
  display: flex;
  align-items: flex-start;
  padding: 8px 0 42px 425px;
  margin: 0 4px 0 3px;
  background: #8a8a8a;
  border-bottom: 1px solid #555a61;
`;

const Paper = styled.div`
  flex: 0 1 1005px;
  background: #fff;
  box-shadow: 3px 3px 6px rgba(0, 0, 0, 0.25), 0 0 6px rgba(0, 0, 0, 0.15);
  svg {
    width: 100%;
    height: auto;
  }
`;

const MdiControls = styled.div`
  position: absolute;
  top: 10px;
  right: 9px;
  display: flex;
  gap: 8px;
`;

const Ucs = styled.div`
  position: absolute;
  left: 14px;
  bottom: 13px;
`;

const NavBar = styled.aside`
  position: absolute;
  right: 2px;
  top: 288px;
  width: 43px;
  height: 163px;
  background: #9d9d9d;
  border: 2px solid #727272;
  border-radius: 6px;
`;

const CommandLine = styled.form`
  position: absolute;
  left: 382px;
  right: 381px;
  bottom: 0;
  height: 34px;
  display: flex;
  align-items: stretch;
  background: #474b54;
  border-radius: 4px 4px 0 0;
  overflow: hidden;
`;

const Grip = styled.div`
  display: flex;
  align-items: center;
  justify-content: space-between;
  width: 70px;
  padding: 0 6px;
  svg:nth-child(2) {
    margin-right: 6px;
  }
`;

const CommandField = styled.div`
  flex: 1;
  display: flex;
  align-items: center;
  gap: 4px;
  padding: 0 5px;
  margin: 1px 1px 1px 0;
  background: #dcdcdc;
  border-radius: 2px;
  input {
    flex: 1;
    padding-left: 4px;
    outline: none;
    font: italic 15px "DejaVu Sans Mono", monospace;
    color: #333;
  }
  input::placeholder {
    color: #777;
    opacity: 1;
  }
`;

const UpCaret = styled.span`
  border: 5px solid transparent;
  border-bottom-color: #6a6a6a;
  border-top-width: 0;
`;

const Watermark = styled.div`
  position: absolute;
  left: 839px;
  bottom: 20px;
  width: 234px;
  text-align: center;
  white-space: nowrap;
  pointer-events: none;
  color: rgba(195, 198, 198, 0.41);
  font-family: "Liberation Sans", "DejaVu Sans", sans-serif;
  font-weight: 700;
  font-size: 38px;
  line-height: 38px;
  p {
    margin: 0;
    font-family: "DejaVu Sans", sans-serif;
    font-size: 66px;
    line-height: 78px;
  }
`;

const Footer = styled.footer`
  display: flex;
  justify-content: space-between;
  align-items: flex-start;
  height: 36px;
`;

const LayoutTabs = styled.nav`
  display: flex;
  padding-left: 22px;
`;

const LayoutTab = styled.button`
  ${slant}
  width: ${({ $w }) => $w}px;
  height: 22px;
  margin-right: 6px;
  line-height: 20px;
  color: ${({ $active }) => ($active ? "#fff" : "#b4b8be")};
  font-weight: ${({ $active }) => ($active ? 700 : 400)};
  &::before {
    right: 40%;
    border-radius: 0 0 0 6px;
    transform: skewX(14deg);
  }
  &::after {
    left: 40%;
    border-radius: 0 0 6px 0;
    transform: skewX(-14deg);
  }
`;

const AddTab = styled.button`
  display: flex;
  align-items: center;
  justify-content: center;
  width: 26px;
  height: 22px;
  background: #2f3644;
  border-radius: ${({ $bottom }) => ($bottom ? "8px 2px 10px 2px" : "2px 10px 2px 8px")};
  margin: ${({ $bottom }) => ($bottom ? "0" : "0 0 3px 10px")};
`;

const Status = styled.div`
  display: flex;
  gap: 3px;
  padding: 1px 5px 0 0;
`;

const StatusGroup = styled.div`
  display: flex;
  align-items: center;
  height: 30px;
  background: #3b4453;
`;

const StatusButton = styled.button`
  width: ${({ $w = 30 }) => $w}px;
  height: 28px;
  display: flex;
  align-items: center;
  justify-content: center;
  ${({ $on }) =>
    $on &&
    css`
      background: #5b91c4;
      margin: 0 1px;
    `}
`;

const SpaceButton = styled(StatusButton)`
  font-family: "Noto Sans", sans-serif;
  color: #fff;
`;

/* ---------- drawing ---------- */

// row of door leaves seen in plan
const doors = (x, y, n, h) => {
  let d = `M${x} ${y}`;
  for (let i = 0; i < n; i++) d += `l2 ${h}l6 ${3 - h}l5 ${h - 3}l2 ${-h}`;
  return d;
};

const doorsV = (x, y, n, w) => {
  let d = `M${x} ${y}`;
  for (let i = 0; i < n; i++) d += `l${w} 2l${3 - w} 6l${w - 3} 5l${-w} 2`;
  return d;
};

const Lines = ({ d, c = "#000", w = 3, dash }) => <path d={d} stroke={c} strokeWidth={w} strokeDasharray={dash} />;

const GREEN = "#00ff00";
const RED = "#ff0000";
const MAG = "#ff00ff";
const GRAY = "#5c5c5c";

const Dots = ({ at }) => at.map(([x, y]) => <rect key={`${x}-${y}`} x={x - 3} y={y - 3} width="6" height="7" fill="#0000ff" />);

// plan titles are far too small to read at this zoom, so they show as strokes
const Caption = ({ x, y, n = 11 }) => {
  let d = "";
  for (let i = 0; i < n; i++) {
    d += `M${x + i * 6} ${y - (i % 3 === 1 ? 3 : 6)}v${i % 4 === 2 ? 12 : 9}`;
    d += `M${x + i * 6 + 1} ${y + (i % 2 ? 0 : 3)}h5`;
  }
  return <path d={d} stroke={MAG} strokeWidth="4" />;
};

const Stairs = ({ x, y, well = "#007d00" }) => (
  <g>
    <rect x={x} y={y} width="54" height="38" fill={GRAY} />
    <Lines c="#fff" w={1} d={`M${x} ${y + 9}h54M${x} ${y + 22}h54M${x + 9} ${y}v38M${x + 42} ${y}v38`} />
    <Lines c={GRAY} d={`M${x + 11} ${y - 8}v54M${x + 42} ${y - 8}v54`} />
    <Lines c="#fa8072" w={3} d={`M${x + 38} ${y + 5}h16M${x + 38} ${y + 18}h16M${x + 38} ${y + 30}h16`} />
    <rect x={x + 21} y={y + 3} width="12" height="32" fill="#fff" stroke={well} strokeWidth="4" />
  </g>
);

const StairsV = ({ x, y, flip, edge = "#000" }) => (
  <g transform={flip ? `translate(0 ${2 * y + 54}) scale(1 -1)` : undefined}>
    <Lines c={GRAY} d={`M${x + 4} ${y + 6}l16 42M${x + 4} ${y + 46}l16 -40M${x} ${y + 27}h24M${x + 4} ${y + 16}h16M${x + 4} ${y + 38}h16M${x + 13} ${y + 4}v46`} />
    <rect x={x + 18} y={y} width="30" height="54" fill={GRAY} />
    <Lines c="#fff" w={1} d={`M${x + 26} ${y}v54M${x + 39} ${y}v54`} />
    <Lines c="#fa8072" d={`M${x + 33} ${y}v18M${x + 49} ${y + 34}v20`} />
    <rect x={x + 20} y={y + 21} width="28" height="10" fill="#fff" stroke="#007d00" strokeWidth="5" />
    <Lines c={GRAY} d={`M${x + 49} ${y + 11}h8M${x + 49} ${y + 41}h8`} />
    <path d={`M${x} ${y}v54`} stroke={edge} strokeWidth="4" />
  </g>
);

const Spiral = ({ x, y }) => (
  <g stroke="#fa8072" strokeWidth="3">
    <circle cx={x} cy={y} r="14" />
    <path d={`M${x - 14} ${y}h28M${x} ${y - 14}v28M${x - 10} ${y - 10}l20 20M${x + 10} ${y - 10}l-20 20`} />
  </g>
);

const Octagon = ({ x, y, c, w = 3 }) => (
  <path transform={`translate(${x} ${y})`} d="M-16 -38H16L39 -15V15L16 38H-16L-39 15V-15Z" stroke={c} strokeWidth={w} />
);

const UPPER = "M971 278H1041V254H1297V296H1311V314H1332V495H1311V480H1278V516H1297V556H1041V532H971V480H954V330H971Z";

const UpperPlan = ({ greens, octagon, children }) => (
  <g>
    <Lines d={UPPER} w={3} />
    <Lines w={6} d="M1041 254V278M971 278V330H954V480H971V532H985M1030 532H1041V556M1297 254V296H1311V314H1332V340M1332 470V495H1311V480H1278V516H1297V556" />
    <Lines c="#999" w={3} dash="8 4" d="M984 278H1036M984 532H1036M953 335V362M953 432V476M1332 345V470" />
    <Lines c="#888" d="M1050 254H1085M1050 556H1085M1160 254H1196M1228 254H1280M1160 556H1196M1228 556H1280" />
    <Lines w={4} d="M1090 254V308M1145 254V266M1090 500V556M1145 500V556" />
    <Lines c={GREEN} d={greens} />
    <Stairs x={1091} y={270} />
    <Stairs x={1091} y={502} well="#000" />
    <Lines c={GRAY} d="M1103 546H1135" />
    <Spiral x={1294} y={498} />
    <Lines c={RED} d="M1318 478l6-8 5 12" />
    <Octagon x={1142} y={405} c={octagon} w={4} />
    {children}
  </g>
);

const GroundPlan = () => (
  <g>
    <Lines c={GRAY} w={9} d="M455 252V244H568V252M455 556V565H568V556M263 360V448" />
    <Lines c={GRAY} d="M470 250H560M470 558H560M275 330V301H285V330M637 391h10v26h-10M637 404h10" />
    <Lines c={GRAY} w={5} d="M380 558V568H418V558" />
    <Lines d="M272 330V371H290V438H270V480M270 330H408V254M270 480H408V556" w={5} />
    <Lines d="M560 274V297H597V330H648V480H598V514H560V552M288 277V312M288 498V530M408 256V330M357 480V500" w={6} />
    <Lines c="#ffff00" w={4} d="M288 278H356V254H460V274H563V254H612V298H626V314H649V495H628V514H612V556H563V536H460V556H356V532H288V480H270V440H289V372H270V330" />
    <Lines w={3} dash="8 14" d="M300 278H350M300 532H350M357 262V276" />
    <Lines c={GREEN} d="M472 272V536M390 352H650M370 330V480M270 469H392M362 308V256H404V330M368 306V262H404M344 282V330H312M344 496H408M362 498V552H400M368 500V546H392M376 482V544M560 285H612M560 519H612M408 262H458V300M626 322h20v6h-18z" />
    <Lines c={GREEN} w={6} d="M610 256V300M610 519V554M405 256V326" />
    <Lines c={GREEN} w={9} d="M353 282V308M353 498V528M598 322H606" />
    {[[294, 288], [294, 303], [294, 488], [294, 506], [294, 524], [621, 302]].map(([x, y]) => (
      <circle key={`${x}-${y}`} cx={x} cy={y} r="6" fill={GREEN} />
    ))}
    <Lines c="#ffff00" w={6} dash="20 6" d="M390 332V480" />
    <Lines c={RED} d={doors(466, 276, 6, 12)} />
    <Lines c={RED} d={doors(466, 522, 6, 12)} />
    <Lines c={RED} d="M318 282l-10 6 10 4-8 6 8 4M318 484l-10 6 10 4M318 516l-10 6 10 6M302 392l-12 7 12 6-10 5 10 8-12 2M558 258l14 4-8 10M558 540l12 8-8 8M635 478l8-10 4 14M398 478l4 12 6-10M392 548l8-12 8 14M298 315h10v12M600 300l8 10" />
    <Stairs x={408} y={270} />
    <Stairs x={408} y={502} well="#000" />
    <Lines c={GRAY} d="M418 546H450" />
    <Spiral x={610} y={496} />
    <Lines c={MAG} w={6} d="M360 318H390M352 489H376M600 272h8M614 270h10" />
    <Lines c={MAG} w={8} d="M363 409H375M380 409H399M531 409H545M549 409H564" />
    <Caption x={505} y={603} />
    <Dots at={[[381, 266], [399, 291], [300, 290], [335, 282], [341, 302], [309, 318], [390, 378], [369, 403], [468, 403], [517, 350], [330, 467], [336, 485], [345, 517], [374, 516], [585, 285], [585, 518], [606, 534], [610, 308], [433, 258], [453, 278]]} />
  </g>
);

const LOWER = "M983 164H1133V157H1234V164H1322V217H1332V369H1322V422H1234V430H1133V422H983V369H977V217H983Z";

const CadDrawing = () => {
  const cols = [625, 667, 708, 750, 792, 833, 875, 917, 958, 1000, 1042, 1083, 1125, 1166, 1208, 1250];
  const rows = [357, 399, 441, 482, 524, 566, 607, 649, 690, 732, 774, 815];
  const major = (i) => (i % 5 === 1 ? "#8d8d96" : "#adadb4");
  return (
    <svg viewBox="431 229 1005 709" fill="none" shapeRendering="crispEdges">
      <rect x="498.500" y="253.500" width="870" height="661" stroke="#8f8f8f" strokeDasharray="4 2" />
      {cols.map((x, i) => <path key={x} d={`M${x}.5 319V847`} stroke={major(i)} />)}
      {rows.map((y, i) => <path key={y} d={`M585 ${y}.5H1281`} stroke={major(i)} />)}
      <rect x="623.500" y="367.500" width="642" height="175" stroke="#ffff00" />
      <rect x="588.500" y="614.500" width="690" height="185" stroke="#ffff00" />
      <rect x="585.500" y="319.500" width="696" height="528" stroke="#0000ff" />

      <g transform="translate(570 310) scale(0.33333)">
        <GroundPlan />
        <UpperPlan octagon={GRAY} greens="M979 330V480M1054 276V532M1252 254V556M1315 314V480M971 325H1332M1100 262H1140V300">
          <path d="M1103 406H1181" stroke="#000" strokeWidth="3" />
          <Lines c={GRAY} d="M1322 391h9v26h-9M1322 404h9" />
          <Dots at={[[976, 403], [1052, 403], [1250, 403], [1150, 323], [1311, 394]]} />
          <Caption x={1159} y={603} n={10} />
        </UpperPlan>
        <g transform="translate(649 0)">
          <UpperPlan octagon="#000" greens="M984 331V478M1251 254V556M954 349H1332M1094 262H1140V308">
            <Dots at={[[983, 403], [1247, 403], [1140, 347], [1136, 279], [1283, 486]]} />
            <Caption x={1163} y={584} n={8} />
          </UpperPlan>
        </g>
      </g>

      <g transform="translate(570 600) scale(0.33333)">
        {/* toilets, left annex */}
        <Lines w={5} d="M130 164H212V298H185V307H143V296H98V230H130ZM143 230V300M130 230H212M182 230V298" />
        <Lines c={GREEN} d="M208 165V298M208 184H288M150 240V300H165M98 296H140M150 283H182M128 235V290" />
        <Lines c={GREEN} w={10} d="M174 198V228M138 235V270M148 250V292" />
        {[172, 188, 204, 220].map((y) => <circle key={y} cx="137" cy={y} r="7" fill={GREEN} />)}
        {[238, 254, 270, 286].map((y) => <circle key={y} cx="104" cy={y} r="7" fill={GREEN} />)}
        <Lines c={RED} d={doorsV(144, 168, 4, 12)} />
        <Lines c={RED} d={doorsV(112, 248, 3, 12)} />
        <Lines c={RED} d="M202 232v18l10 6V234" />
        <rect x="170" y="160" width="24" height="18" stroke="#000" strokeWidth="3" fill="#fff" />
        <Lines c={GRAY} w={5} d="M188 262H210M188 274H210M188 286H210M194 250V294M204 250V294" />
        <Lines c={MAG} w={6} d="M195 188H225M172 240H190" />
        <Dots at={[[195, 196], [247, 182], [120, 244], [120, 266], [170, 264], [160, 283]]} />

        {/* ground floor */}
        <Lines c={GRAY} w={4} d="M429 164V140H547V164M434 164V148H541V164M264 385V210H290M271 385V214H290M281 369V218H296" />
        <Lines c={GRAY} w={6} d="M290 146H318V164M432 152H544" />
        <Lines c="#fa8072" d="M262 207H290M287 140H325V164" />
        <Lines w={4} d="M290 164H626V217H635V248H668V338H635V369H626V422H254V386H288V422" />
        <Lines w={6} d="M548 164H626V217M290 164V217H300V369H288V400M440 164V176M535 164V176M626 369V422M635 248H668M362 369V420M362 164V217M290 369H378" />
        <Lines c={GREEN} d="M520 175V422M604 165V422M300 331H635M298 369V422M290 412H360M290 190H362M378 216H360" />
        <Lines c={RED} d={doors(441, 174, 6, 14)} />
        <Lines c={RED} d={doorsV(299, 250, 6, 13)} />
        <Lines c={RED} d="M290 165v8h18v-8M342 368l14 12v-12M275 386v14h10M637 258l8-8" />
        <Lines c={GRAY} w={5} d="M320 176H356M320 188H356M340 165V216M326 165V190" />
        <rect x="308" y="194" width="34" height="22" fill={GRAY} />
        <Lines c="#fa8072" d="M322 196V216" />
        <StairsV x={360} y={165} />
        <StairsV x={360} y={368} flip />
        <Spiral x={270} y={404} />
        <rect x="652" y="282" width="16" height="20" fill="#ffff00" />
        <Lines c="#ffff00" w={4} d="M630 338V312L638 304M637 258h8" />
        <Lines c="#fa8072" w={6} d="M636 241H656" />
        <path d="M638 282q12 0 12 11t-12 11" stroke="#0000ff" strokeWidth="3" />
        <Dots at={[[518, 295], [600, 292], [467, 329], [321, 409], [296, 391]]} />
        <Caption x={505} y={478} />

        {/* annex, first floor */}
        <Lines w={5} d="M828 164H908V298H878V307H839V296H795V230H828ZM866 164V230M839 230V300M878 230V298M828 230H908" />
        <Lines c={GREEN} d="M830 175H905M902 165V230M870 222V300M803 230V295M795 286H839M839 297H878M848 198V228" />
        {[205, 220].map((y) => <circle key={y} cx="838" cy={y} r="7" fill={GREEN} />)}
        <Lines c={RED} d="M852 182l10 6v10l-10-4M830 234l8 10 2-10M868 216l10 12M876 232l-6 10h16V234" />
        <Lines c={GRAY} w={5} d="M882 252H904M882 266H904M882 280H904M888 246V292M898 246V292M868 164H905" />
        <Lines c={MAG} w={6} d="M820 264H838M868 261H894M890 198H902" />
        <Dots at={[[855, 180], [884, 175], [816, 284], [855, 296], [868, 265], [904, 198]]} />

        {/* first floor */}
        <Lines d={LOWER} w={4} />
        <Lines w={6} d="M1332 217V369M1322 369V422M1133 430H1234M983 385H950V420H983V369" />
        <Lines c={GREEN} d="M991 217V369M1003 217V422M978 256H1094M1094 247H1332M1306 164V422M1315 217V369M952 394H983" />
        <Lines c="#ffff00" w={6} dash="18 6" d="M1094 219V366" />
        <g transform="translate(2112 0) scale(-1 1)"><StairsV x={1057} y={165} /></g>
        <StairsV x={1055} y={165} />
        <StairsV x={1055} y={368} flip />
        <Spiral x={966} y={406} />
        <Octagon x={1183} y={292} c={GRAY} w={5} />
        <Dots at={[[989, 292], [1001, 316], [1034, 253], [1211, 245], [1304, 292], [1312, 292]]} />
        <Caption x={1167} y={476} n={10} />

        {/* roof */}
        <g transform="translate(660 0)">
          <Lines w={4} d={LOWER} />
          <Lines w={6} d="M983 164H1133M1234 164H1322V217M1322 369V422M1133 430H1234M983 164V217M983 369V422" />
          <Lines w={4} d="M983 386H950V422H983" />
          <StairsV x={1055} y={165} edge="#007d00" />
          <StairsV x={1055} y={368} flip edge="#007d00" />
          <Spiral x={967} y={405} />
          <Octagon x={1183} y={292} c="#000" w={6} />
          <Caption x={1170} y={458} n={8} />
        </g>
      </g>

      <path d="M901 571.500H998M949.500 523V620" stroke="#000" />
      <rect x="946.500" y="568.500" width="6" height="6" fill="#fff" stroke="#000" />
    </svg>
  );
};

/* ---------- pieces of the window ---------- */

const quickTools = [
  ["newFile", "New"],
  ["open", "Open"],
  ["save", "Save"],
  ["saveAs", "Save As"],
  ["openMobile", "Open from Web & Mobile"],
  ["saveMobile", "Save to Web & Mobile"],
  ["print", "Plot"],
  ["undo", "Undo"],
];

const ribbonTabs = ["Home", "Insert", "Annotate", "Parametric", "View", "Manage", "Output", "Add-ins", "Collaborate", "Express Tools", "Featured Apps"];

const Panel = ({ title, w, pad, menu = true, launcher, children }) => (
  <PanelBox $w={w}>
    <PanelBody $pad={pad}>{children}</PanelBody>
    <PanelTitle>
      <button>
        {title}
        {menu && <Caret $s={5} />}
      </button>
      {launcher && (
        <Svg w={8}><path d="M1 1l5 5M7 2v5H2" stroke={L} strokeWidth="1.500" /></Svg>
      )}
    </PanelTitle>
  </PanelBox>
);

const Big = ({ icon, label, w, top, menu }) => (
  <BigButton $w={w} $top={top}>
    {icons[icon]}
    {label}
    {menu && <Caret />}
  </BigButton>
);

const Small = ({ icon, label, name, menu, on }) => (
  <SmallButton $on={on} aria-label={label || name}>
    {icons[icon]}
    {label}
    {menu && <Caret />}
  </SmallButton>
);

const CloseX = ({ c = "#9a9da1", s = 12 }) => (
  <Svg w={s} vw={12}><path d="M1 1l10 10M11 1L1 11" stroke={c} strokeWidth="2.500" /></Svg>
);

const PlusIcon = () => <Svg w={10}><path d="M5 0v10M0 5h10" stroke="#a5a8ad" strokeWidth="2" /></Svg>;

const TopBar = () => {
  const [tab, setTab] = useState("Home");
  return (
    <Header>
      <AppButton aria-label="Application menu">
        <LogoIcon />
      </AppButton>
      <TitleBar>
        {quickTools.map(([icon, name]) => (
          <ToolButton key={icon} aria-label={name}>{icons[icon]}</ToolButton>
        ))}
        <ToolButton $w={14} aria-label="Undo list"><Caret /></ToolButton>
        <ToolButton aria-label="Redo">{icons.redo}</ToolButton>
        <ToolButton $w={14} aria-label="Redo list"><Caret $c="#8a8e94" /></ToolButton>
        <ToolButton $w={22} aria-label="Customize">{icons.customize}</ToolButton>
        <Title>
          Autodesk AutoCAD 2021{"    "}
          <bdi dir="ltr">مسجد مدينة بدر.dwg</bdi>
        </Title>
        <RightCaret />
        <Search placeholder="Type a keyword or phrase" aria-label="Search" />
        <ToolButton aria-label="Search">{icons.search}</ToolButton>
        <UserButton>
          {icons.user}
          mmahmoudsh...
          <Caret $s={3} />
        </UserButton>
        <Trial>{icons.clock}19</Trial>
        <ToolButton aria-label="App Store">{icons.cart}</ToolButton>
        <ToolButton aria-label="Autodesk">{icons.a360}</ToolButton>
        <MenuCaret $w={11} $end aria-label="Autodesk menu"><Caret $s={3} /></MenuCaret>
        <Divider />
        <ToolButton aria-label="Help">{icons.help}</ToolButton>
        <MenuCaret $w={36} aria-label="Help menu"><Caret $s={3} /></MenuCaret>
        <ToolButton $w={31} aria-label="Minimize">{icons.min}</ToolButton>
        <ToolButton $w={31} aria-label="Maximize">{icons.max}</ToolButton>
        <ToolButton $w={31} aria-label="Close">{icons.close}</ToolButton>
      </TitleBar>
      <TabRow>
        {ribbonTabs.map((name) => (
          <RibbonTab key={name} $active={tab === name} onClick={() => setTab(name)}>
            {name}
          </RibbonTab>
        ))}
        <RibbonTab $context>Layout</RibbonTab>
        <Collapse aria-label="Minimize ribbon">
          <span />
          <Caret />
        </Collapse>
      </TabRow>
    </Header>
  );
};

const HomeRibbon = () => (
  <Ribbon>
    <Panel title="Draw" w={277} pad={3}>
      <Big icon="line" label="Line" w={46} />
      <Big icon="polyline" label="Polyline" w={60} />
      <Big icon="circle" label="Circle" w={62} menu />
      <Big icon="arc" label="Arc" w={52} menu />
      <Stack $pad={4}>
        <Small icon="rect" name="Rectangle" menu />
        <Small icon="ellipse" name="Ellipse" menu />
        <Small icon="hatch" name="Hatch" menu />
      </Stack>
    </Panel>

    <Panel title="Modify" w={316} pad={6}>
      <Stack $w={92}>
        <Small icon="move" label="Move" />
        <Small icon="copy" label="Copy" />
        <Small icon="stretch" label="Stretch" />
      </Stack>
      <Stack $w={88}>
        <Small icon="rotate" label="Rotate" />
        <Small icon="mirror" label="Mirror" />
        <Small icon="scale" label="Scale" />
      </Stack>
      <Stack $w={95}>
        <Small icon="trim" label="Trim" menu />
        <Small icon="fillet" label="Fillet" menu />
        <Small icon="array" label="Array" menu />
      </Stack>
      <Stack>
        <Small icon="erase" name="Erase" />
        <Small icon="explode" name="Explode" />
        <Small icon="offset" name="Offset" />
      </Stack>
    </Panel>

    <Panel title="Annotation" w={211} pad={6}>
      <Big icon="text" label="Text" w={46} menu />
      <Big icon="dimension" label="Dimension" w={86} />
      <Stack>
        <Small icon="linear" name="Linear" menu />
        <Small icon="leader" name="Leader" menu />
        <Small icon="table" label="Table" />
      </Stack>
    </Panel>

    <Panel title="Layers" w={341}>
      <Big icon="layerProps" label={"Layer\nProperties"} w={70} />
      <LayerTools>
        <Combo>
          {icons.bulb}
          {icons.sun}
          {icons.freezeVp}
          {icons.unlock}
          <Swatch $c="#0000ff" />
          <select aria-label="Layer">
            <option>Internal Dimensi</option>
          </select>
          <Caret $s={5} />
        </Combo>
        <IconRow>
          <Small icon="layOff" name="Off" />
          <Small icon="layIso" name="Isolate" />
          <Small icon="layFreeze" name="Freeze" />
          <Small icon="layLock" name="Lock" />
          <Small icon="layCurrent" name="Make Current" />
        </IconRow>
        <IconRow>
          <Small icon="layOn" name="Turn All On" />
          <Small icon="layUniso" name="Unisolate" />
          <Small icon="layThaw" name="Thaw All" />
          <Small icon="layUnlock" name="Unlock" />
          <Small icon="layMatch" name="Match Layer" />
        </IconRow>
      </LayerTools>
    </Panel>

    <Panel title="Block" w={100} pad={1}>
      <Big icon="insert" label="Insert" w={50} top={4} menu />
      <Stack $pad={4}>
        <Small icon="blkNew" name="Create" />
        <Small icon="blkEdit" name="Edit" />
        <Small icon="attEdit" name="Edit Attributes" menu />
      </Stack>
    </Panel>

    <Panel title="Properties" w={277} launcher>
      <Big icon="match" label={"Match\nProperties"} w={70} />
      <Stack $w={28} $pad={4}>
        <Small icon="wheel" name="Object Color" />
        <Small icon="weights" name="Lineweight" />
        <Small icon="linetypes" name="Linetype" />
      </Stack>
      <PropStack>
        <Combo $off>
          <Swatch $c="#1423b4" $b="#5d6470" $m="0 8px 0 11px" />
          <select aria-label="Color">
            <option>ByLayer</option>
          </select>
          <Caret $s={5} $c="#8a9099" />
        </Combo>
        <Combo>
          <Rule />
          <select aria-label="Lineweight">
            <option>ByLayer</option>
          </select>
          <Caret $s={5} />
        </Combo>
        <Combo>
          <Rule />
          <select aria-label="Linetype">
            <option>ByLayer</option>
          </select>
          <Caret $s={5} />
        </Combo>
      </PropStack>
    </Panel>

    <Panel title="Groups" w={85} pad={0}>
      <Big icon="group" label="Group" w={52} />
      <Stack $pad={3}>
        <Small icon="ungroup" name="Ungroup" />
        <Small icon="groupEdit" name="Group Edit" />
        <Small icon="groupSel" name="Group Selection" on />
      </Stack>
    </Panel>

    <Panel title="Utilities" w={121}>
      <Big icon="measure" label="Measure" w={80} menu />
      <Stack $pad={6}>
        <Small icon="quickSel" name="Quick Select" />
        <Small icon="selectAll" name="Select All" />
        <Small icon="calc" name="Calculator" />
      </Stack>
    </Panel>

    <Panel title="Clipboard" w={99} pad={3} menu={false}>
      <Big icon="paste" label="Paste" w={62} top={7} menu />
      <Stack $pad={4}>
        <Small icon="cut" name="Cut" />
        <Small icon="copyClip" name="Copy Clip" />
      </Stack>
    </Panel>

    <Panel title="View" w={77} launcher>
      <Big icon="base" label="Base" w={70} top={12} menu />
    </Panel>
  </Ribbon>
);

const FileTabs = () => (
  <DocTabs>
    <DocTab $w={154}>Start</DocTab>
    <DocTab $w={152}>
      <bdi dir="ltr">عمارة الغردقة*</bdi>
      <button aria-label="Close drawing"><CloseX /></button>
    </DocTab>
    <DocTab $w={156} $active>
      <bdi dir="ltr">مسجد مدينة بدر*</bdi>
      <button aria-label="Close drawing"><CloseX /></button>
    </DocTab>
    <AddTab aria-label="New drawing"><PlusIcon /></AddTab>
  </DocTabs>
);

const NavTools = () => (
  <NavBar aria-label="Navigation bar">
    <Svg w={39} h={159}>
      <path d="M1 12.500H38M5 57.500H34" stroke="#858585" strokeDasharray="2 1" />
      <circle cx="33" cy="6" r="4.500" stroke="#777" /><path d="M31 4l4 4M35 4l-4 4" stroke="#777" />
      <path d="M17 24h12v12a12 12 0 1 1-12-12z" stroke="#838383" strokeWidth="1.500" />
      <circle cx="17" cy="36" r="6" stroke="#838383" strokeWidth="1.500" />
      <text x="20" y="52" fontSize="10" fontWeight="700" fill="#8688a0">2D</text>
      <path d="M13 89C9 83 4 80 6 77s5 1 7 3V68c0-3 4-3 4 0v-4c0-3 4-3 4 0v3c0-3 4-3 4 0v4c0-3 4-3 4 0l1 6-3 12z" fill="#a6a69e" stroke="#7c7c7c" strokeWidth="1.500" />
      <path d="M17 68v8M21 67v9M25 70v7" stroke="#7c7c7c" />
      <path d="M6 98l20 20M24 98L6 117M6 102v-4h4M20 98h4v4M6 113v4h4" stroke="#777" strokeWidth="1.500" />
      <circle cx="25" cy="117" r="6" fill="#a6a69e" stroke="#777" strokeWidth="1.500" />
      <path d="M29 121l6 6" stroke="#777" strokeWidth="3" />
      <path d="M17 135h7l-3.500 4z" fill="#777" />
      <circle cx="33" cy="153" r="4.500" fill="#858585" /><path d="M31 152h4M31 154h4" stroke="#a5a5a5" />
    </Svg>
  </NavBar>
);

const Command = () => (
  <CommandLine>
    <Grip>
      <Svg w={7} h={22}><path d="M1 0v22M5 0v22" stroke="#c8cacd" strokeWidth="2" strokeDasharray="2 2" /></Svg>
      <CloseX c="#d0d0d0" s={11} />
      <Svg><path d="M2 18L11 9" stroke={L} strokeWidth="4" strokeLinecap="round" /><path d="M19 4l-4 4-3-3 3-4a5.500 5.500 0 0 0-6 8l3 3a5.500 5.500 0 0 0 7-8z" fill={L} /></Svg>
    </Grip>
    <CommandField>
      <Svg w={20} h={16}><path d="M.5.5h19v15H.5z" fill="#cfcfcf" stroke="#808080" /><path d="M1 1h18v3H1z" fill="#707070" /><path d="M2 7l3 2-3 2M6 12h5" stroke="#707070" /></Svg>
      <Caret $s={5} $c="#6a6a6a" />
      <input placeholder="Type a command" aria-label="Command" />
      <UpCaret />
    </CommandField>
  </CommandLine>
);

const StatusIcon = ({ icon, name, on, w }) => (
  <StatusButton $on={on} $w={on ? 28 : w} aria-label={name}>{icons[icon]}</StatusButton>
);

const StatusMenu = ({ name, w = 20 }) => (
  <StatusButton $w={w} aria-label={name}><Caret $s={5} /></StatusButton>
);

const StatusBar = () => (
  <Footer>
    <LayoutTabs>
      <LayoutTab $w={64}>Model</LayoutTab>
      <LayoutTab $w={84} $active>Layout1</LayoutTab>
      <LayoutTab $w={74}>Layout2</LayoutTab>
      <AddTab $bottom aria-label="New layout"><PlusIcon /></AddTab>
    </LayoutTabs>
    <Status>
      <StatusGroup>
        <SpaceButton $w={52}>PAPER</SpaceButton>
      </StatusGroup>
      <StatusGroup>
        <StatusIcon icon="ortho" name="Ortho" />
        <StatusIcon icon="polar" name="Polar tracking" on />
        <StatusMenu name="Polar settings" />
        <StatusIcon icon="iso" name="Isometric drafting" />
        <StatusMenu name="Isoplane" />
        <StatusIcon icon="otrack" name="Object snap tracking" on />
        <StatusIcon icon="osnap" name="Object snap" on />
        <StatusMenu name="Snap settings" />
      </StatusGroup>
      <StatusGroup>
        <StatusIcon icon="selCycle" name="Selection cycling" />
        <StatusIcon icon="annoVis" name="Annotation visibility" />
        <StatusIcon icon="annoAuto" name="Auto scale" />
      </StatusGroup>
      <StatusGroup>
        <StatusIcon icon="gear" name="Workspace" />
        <StatusMenu name="Workspace menu" w={18} />
      </StatusGroup>
      <StatusGroup>
        <StatusIcon icon="plus" name="Annotation monitor" />
      </StatusGroup>
      <StatusGroup>
        <StatusIcon icon="isolate" name="Isolate objects" />
      </StatusGroup>
      <StatusGroup>
        <StatusIcon icon="gfx" name="Graphics performance" w={34} />
      </StatusGroup>
      <StatusGroup>
        <StatusIcon icon="fullscreen" name="Clean screen" />
        <StatusIcon icon="menu" name="Customization" />
      </StatusGroup>
    </Status>
  </Footer>
);

const App = () => (
  <>
    <GlobalStyle />
    <Window>
      <TopBar />
      <HomeRibbon />
      <FileTabs />
      <Strip />
      <Canvas>
        <Paper>
          <CadDrawing />
        </Paper>
        <MdiControls>
          <Svg w={17} h={16}><path d="M1.500 8.500h14v5h-14z" fill="#fff" stroke="#444a55" /></Svg>
          <Svg w={17} h={16}><path d="M5 1.500h10v10M2.500 4.500h9v10h-9z" stroke="#444a55" strokeWidth="4" /><path d="M5 1.500h10v10M2.500 4.500h9v10h-9z" stroke="#fff" strokeWidth="1.500" /></Svg>
          <Svg w={17} h={16}><path d="M3 3l10 10M13 3L3 13" stroke="#444a55" strokeWidth="5" /><path d="M3 3l10 10M13 3L3 13" stroke="#fff" strokeWidth="2.500" /></Svg>
        </MdiControls>
        <NavTools />
        <Ucs>
          <Svg w={66} h={112}>
            <path d="M1.500 1.500V109.500H63.500ZM1.500 100.500H10.500V109.500M3 30l7 7 7-7M10.500 37v8M38 93l14 15M53 92L38 108" stroke="#1a3fff" />
          </Svg>
        </Ucs>
        <Command />
      </Canvas>
      <StatusBar />
      <Watermark>
        <p>مستقل</p>
        mostaql.com
      </Watermark>
    </Window>
  </>
);

export default App;
